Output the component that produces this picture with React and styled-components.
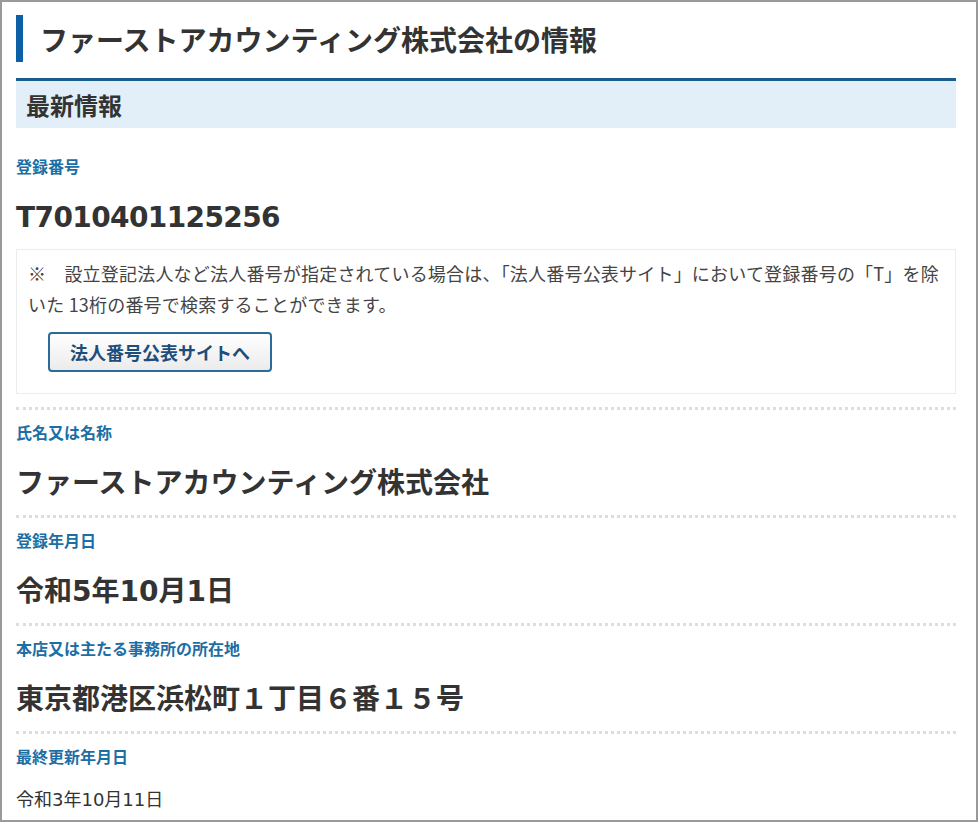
import React from 'react';
import styled, { createGlobalStyle } from 'styled-components';

const GlobalStyle = createGlobalStyle`
    html, body {
        margin:0;
        padding:0;
        background:#fff;
    }
    body {
        font-family:"DejaVu Sans", "Noto Sans CJK JP", sans-serif;
        color:#333;
    }
`

const fields = [
    { label: '氏名又は名称', value: 'ファーストアカウンティング株式会社' },
    { label: '登録年月日', value: '令和5年10月1日' },
    { label: '本店又は主たる事務所の所在地', value: '東京都港区浜松町１丁目６番１５号' },
];

const App = () => {
    return (
        <>
            <GlobalStyle />
            <Frame>
                <PageTitle>ファーストアカウンティング株式会社の情報</PageTitle>
                <SectionHeader>最新情報</SectionHeader>

                <Field>
                    <Label>登録番号</Label>
                    <Value tight>T7010401125256</Value>
                    <NoteBox>
                        <p>※　設立登記法人など法人番号が指定されている場合は、「法人番号公表サイト」において登録番号の「T」を除いた 13桁の番号で検索することができます。</p>
                        <LinkButton type="button">法人番号公表サイトへ</LinkButton>
                    </NoteBox>
                </Field>

                {fields.map((f) => (
                    <Field key={f.label}>
                        <Label>{f.label}</Label>
                        <Value>{f.value}</Value>
                    </Field>
                ))}

                <Field last>
                    <Label>最終更新年月日</Label>
                    <Value small>令和3年10月11日</Value>
                </Field>
            </Frame>
        </>
    )
}

export default App;

const Frame = styled.div`
    width:978px;
    height:822px;
    box-sizing:border-box;
    border:2px solid #9a9a9a;
    padding:13px 20px 0 14px;
    overflow:hidden;
    display:flex;
    flex-direction:column;
`

const PageTitle = styled.h1`
    margin:0;
    height:47px;
    display:flex;
    align-items:center;
    border-left:7px solid #0d5fa6;
    padding-left:17px;
    font-size:28px;
    font-weight:700;
    color:#333;
    font-family:"Noto Sans CJK JP", sans-serif;
`

const SectionHeader = styled.h2`
    margin:16px 0 0;
    height:47px;
    display:flex;
    align-items:center;
    border-top:3px solid #1b5c8e;
    background:#e3eff8;
    padding-left:10px;
    font-size:24px;
    font-weight:700;
    color:#333;
    font-family:"Noto Sans CJK JP", sans-serif;
`

const Field = styled.div`
    padding:11px 0 ${props => props.last ? '0' : '13px'};
    border-bottom:${props => props.last ? 'none' : '3px dotted #dedede'};

    &:nth-of-type(1) {
        padding-top:27px;
    }
`

const Label = styled.div`
    font-size:16px;
    line-height:22px;
    font-weight:700;
    color:#1c6ea4;
    font-family:"Noto Sans CJK JP", sans-serif;
`

const Value = styled.div`
    margin-top:${props => props.small ? '20px' : '23px'};
    font-size:${props => props.small ? '18px' : '28px'};
    line-height:${props => props.small ? '26px' : '36px'};
    font-weight:${props => props.small ? 400 : 700};
    letter-spacing:${props => props.tight ? '-0.6px' : '0'};
    color:#333;
`

const NoteBox = styled.div`
    margin-top:13px;
    border:1px solid #ececec;
    padding:8px 11px 21px;

    & > p {
        margin:0;
        font-family:"Noto Sans CJK JP", sans-serif;
        font-size:18px;
        line-height:31px;
        letter-spacing:0.2px;
        color:#444;
    }
`

const LinkButton = styled.button`
    margin:12px 0 0 20px;
    height:40px;
    width:224px;
    border:2px solid #2b6c96;
    border-radius:4px;
    background:linear-gradient(#ffffff, #ebebeb);
    font-family:"Noto Sans CJK JP", sans-serif;
    font-size:18px;
    font-weight:700;
    color:#1d4e7a;
    cursor:pointer;
`
